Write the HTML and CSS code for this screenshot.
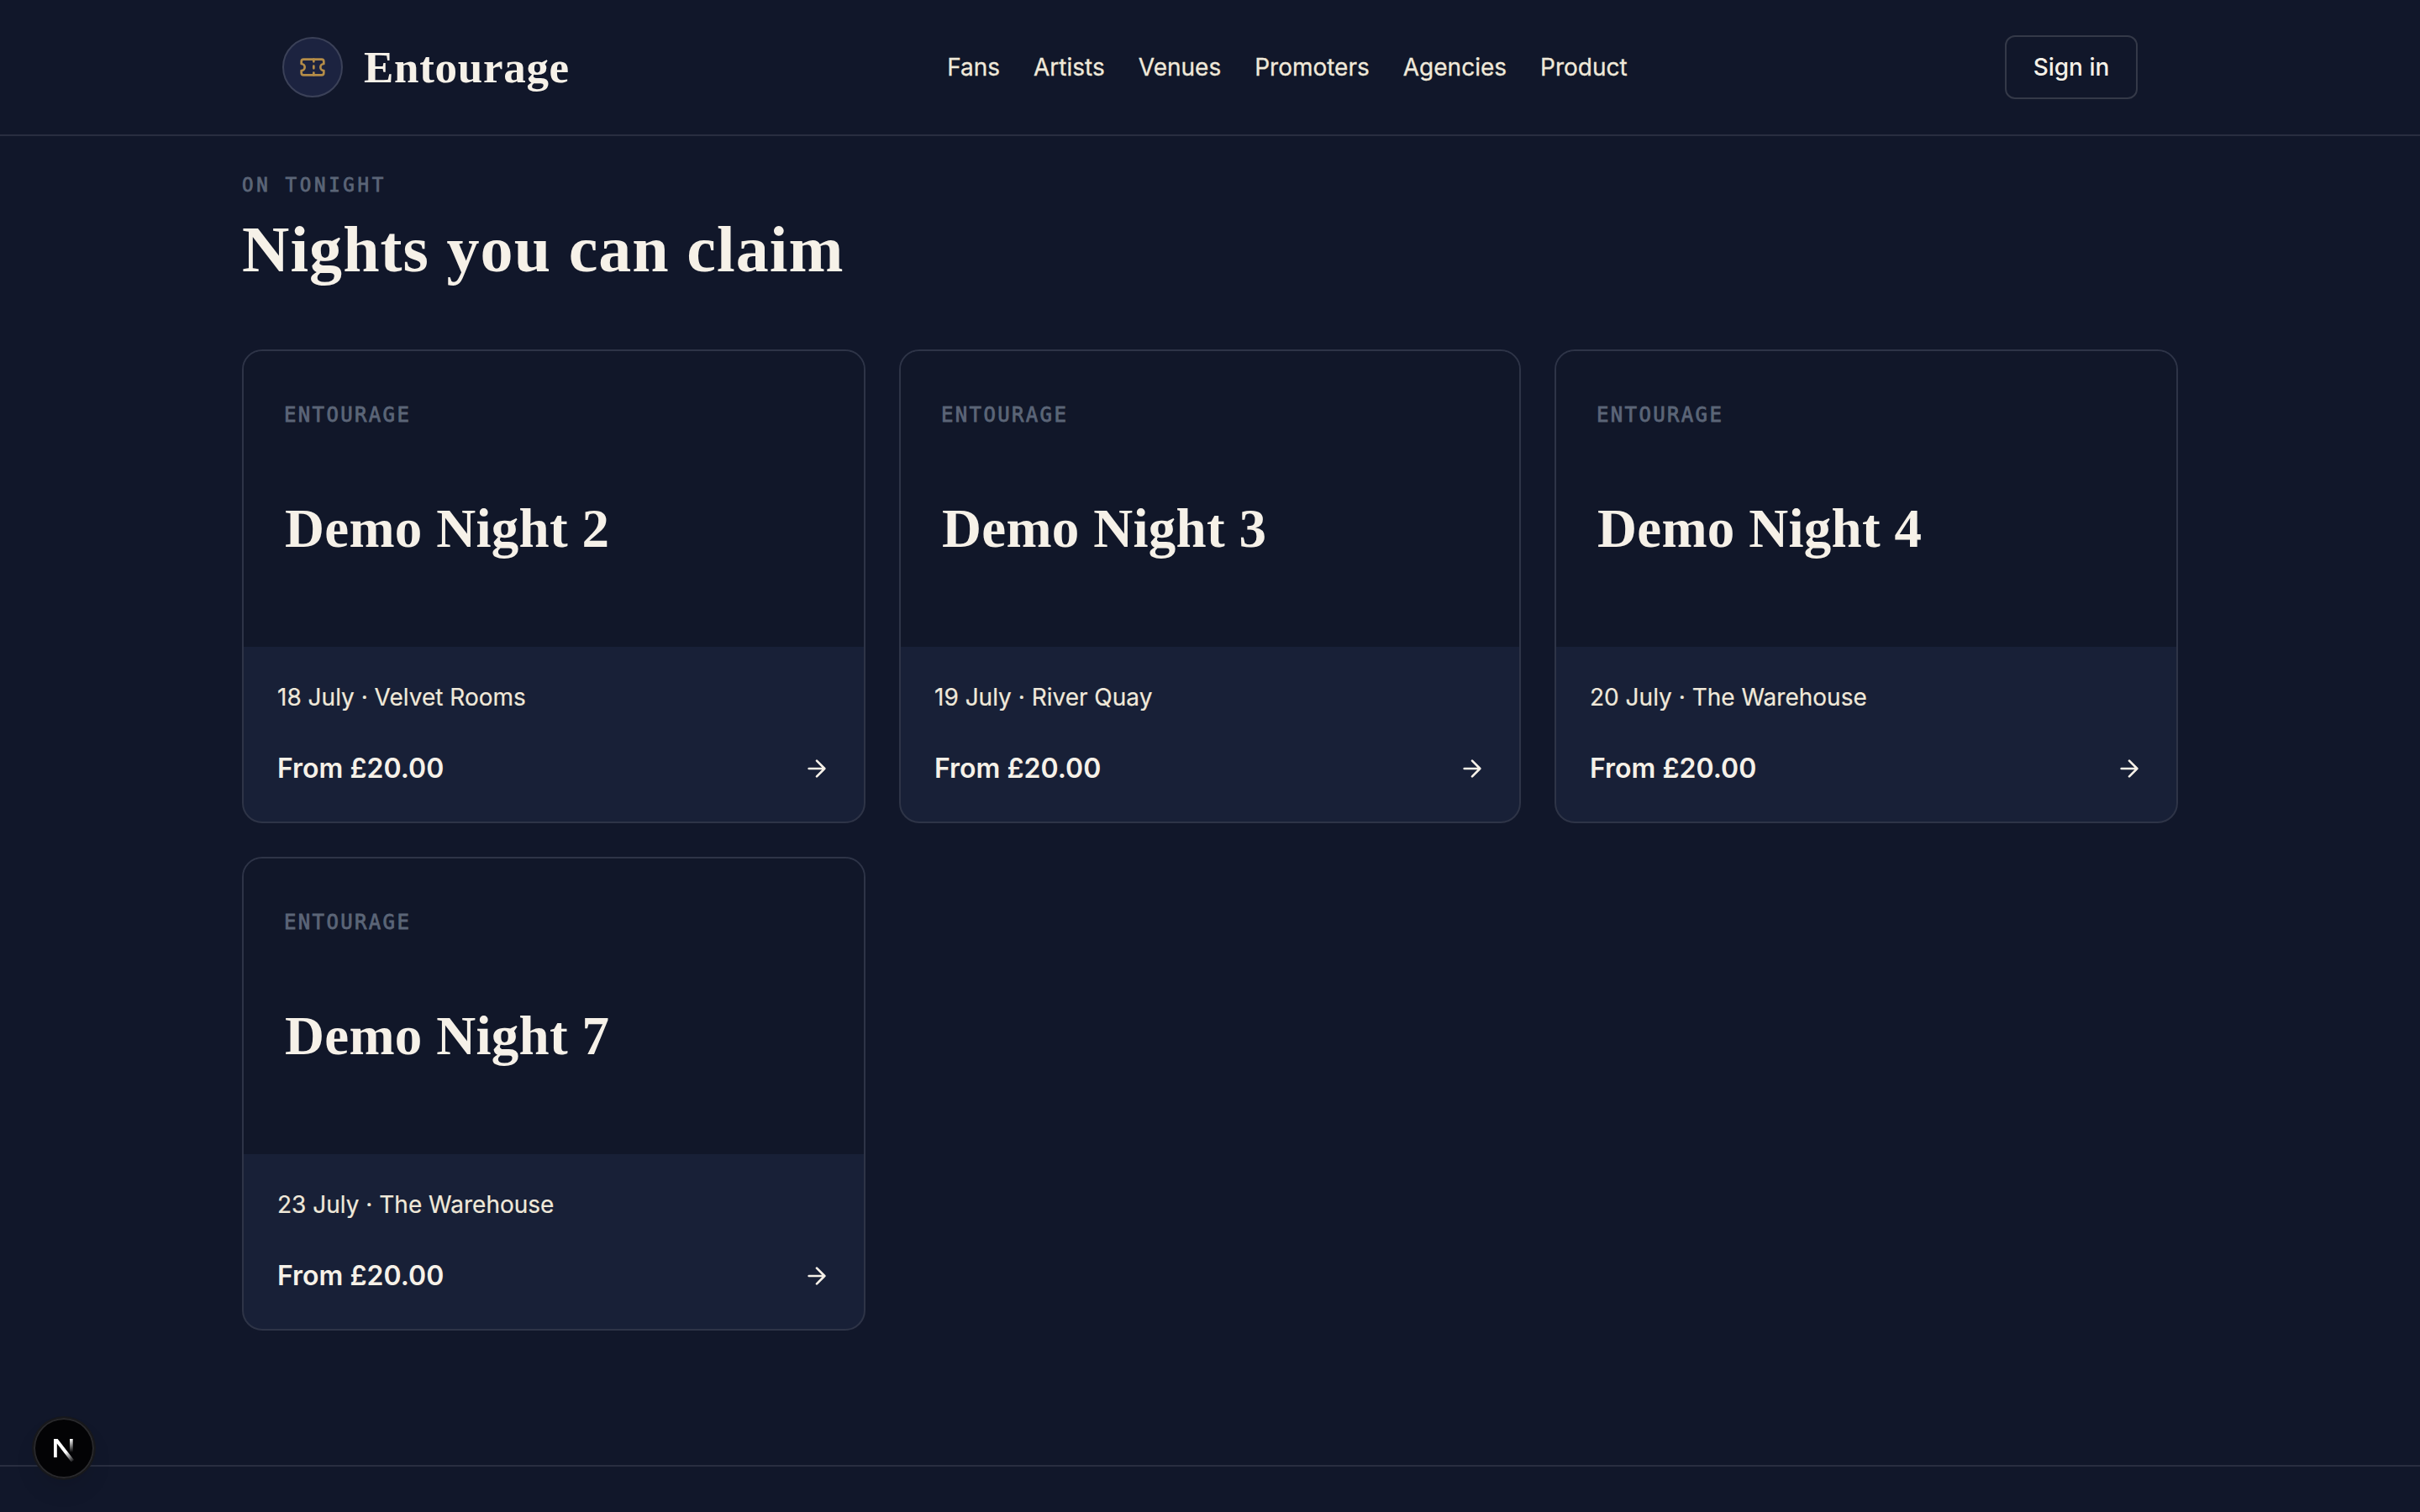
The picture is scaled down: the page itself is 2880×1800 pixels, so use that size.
FILE: index.html
```html
<!DOCTYPE html>
<html lang="en">
<head>
<meta charset="utf-8">
<title>Entourage</title>
<link rel="stylesheet" href="styles.css">
</head>
<body>
<svg class="sprite" aria-hidden="true">
  <symbol id="arrow" viewBox="0 0 24 24"><path d="M5 12h14M12 5l7 7-7 7"/></symbol>
</svg>
<header class="site-header">
  <div class="header-inner">
    <a class="brand">
      <span class="brand-mark">
        <svg class="icon" viewBox="0 0 24 24"><path d="M2 9a3 3 0 0 1 0 6v2a2 2 0 0 0 2 2h16a2 2 0 0 0 2-2v-2a3 3 0 0 1 0-6V7a2 2 0 0 0-2-2H4a2 2 0 0 0-2 2Z"/><path d="M13 5v2M13 17v2M13 11v2"/></svg>
      </span>
      <span class="brand-name">Entourage</span>
    </a>
    <nav class="nav">
      <a>Fans</a><a>Artists</a><a>Venues</a><a>Promoters</a><a>Agencies</a><a>Product</a>
    </nav>
    <a class="sign-in">Sign in</a>
  </div>
</header>
<main class="section">
  <p class="eyebrow">ON TONIGHT</p>
  <h1 class="heading">Nights you can claim</h1>
  <div class="grid">
    <article class="card">
      <div class="poster"><p class="poster-label">ENTOURAGE</p><h2 class="poster-title">Demo Night 2</h2></div>
      <div class="details"><p class="when">18 July · Velvet Rooms</p><div class="price-row"><span>From £20.00</span><svg class="icon"><use href="#arrow"/></svg></div></div>
    </article>
    <article class="card">
      <div class="poster"><p class="poster-label">ENTOURAGE</p><h2 class="poster-title">Demo Night 3</h2></div>
      <div class="details"><p class="when">19 July · River Quay</p><div class="price-row"><span>From £20.00</span><svg class="icon"><use href="#arrow"/></svg></div></div>
    </article>
    <article class="card">
      <div class="poster"><p class="poster-label">ENTOURAGE</p><h2 class="poster-title">Demo Night 4</h2></div>
      <div class="details"><p class="when">20 July · The Warehouse</p><div class="price-row"><span>From £20.00</span><svg class="icon"><use href="#arrow"/></svg></div></div>
    </article>
    <article class="card">
      <div class="poster"><p class="poster-label">ENTOURAGE</p><h2 class="poster-title">Demo Night 7</h2></div>
      <div class="details"><p class="when">23 July · The Warehouse</p><div class="price-row"><span>From £20.00</span><svg class="icon"><use href="#arrow"/></svg></div></div>
    </article>
  </div>
</main>
<footer class="site-footer"></footer>
<div class="dev-badge">
  <svg viewBox="0 0 72 72">
    <defs>
      <linearGradient id="fade-diagonal" gradientUnits="userSpaceOnUse" x1="38" y1="41" x2="47" y2="53"><stop stop-color="#fff"/><stop offset="1" stop-color="#fff" stop-opacity="0"/></linearGradient>
      <linearGradient id="fade-stem" x1="0" y1="0" x2="0" y2="1"><stop stop-color="#fff"/><stop offset="1" stop-color="#fff" stop-opacity="0"/></linearGradient>
    </defs>
    <rect x="43" y="25" width="3.7" height="16" fill="url(#fade-stem)"/>
    <path d="M24 47V25h4.6L48 50l-3.2 2.4L27.8 30.6V47Z" fill="url(#fade-diagonal)"/>
  </svg>
</div>
</body>
</html>
```
FILE: styles.css
```css
* { box-sizing: border-box; margin: 0; padding: 0; }

body {
  min-height: 1800px;
  display: flex;
  flex-direction: column;
  background: #11172a;
  color: #f6f1e8;
  font-family: Inter, "Liberation Sans", sans-serif;
}

.sprite { position: absolute; width: 0; height: 0; }

.icon {
  width: 32px;
  height: 32px;
  fill: none;
  stroke: currentColor;
  stroke-width: 2;
  stroke-linecap: round;
  stroke-linejoin: round;
}

.site-header { border-bottom: 2px solid #292e40; }

.header-inner {
  width: 2304px;
  height: 160px;
  margin: 0 auto;
  padding: 0 48px;
  display: flex;
  align-items: center;
  justify-content: space-between;
}

.brand { display: flex; align-items: center; gap: 25px; }

.brand-mark {
  width: 72px;
  height: 72px;
  display: grid;
  place-items: center;
  border: 2px solid #3b4158;
  border-radius: 50%;
  background: #1c2340;
  color: #b58d48;
}

.brand-name {
  font: 700 53px/64px "Liberation Serif", serif;
  letter-spacing: 0.7px;
}

.nav {
  display: flex;
  gap: 40px;
  color: #f0e9da;
  font-size: 28px;
  line-height: 40px;
  -webkit-text-stroke: 0.3px currentColor;
}

.sign-in {
  width: 158px;
  height: 76px;
  border: 2px solid #343948;
  border-radius: 12px;
  font-size: 28px;
  font-weight: 500;
  line-height: 72px;
  text-align: center;
}

.section {
  width: 2304px;
  margin: 0 auto;
  padding: 42px 0 160px;
}

.eyebrow, .poster-label {
  color: #5b6577;
  font-family: "DejaVu Sans Mono", monospace;
  line-height: 32px;
  -webkit-text-stroke: 0.8px currentColor;
}

.eyebrow { font-size: 22.5px; letter-spacing: 3.65px; }

.heading {
  margin: 16px 0 74px;
  font: 700 78px/90px "Liberation Serif", serif;
  letter-spacing: 1.05px;
}

.grid {
  display: grid;
  grid-template-columns: 742px 740px 742px;
  gap: 40px;
}

.card {
  overflow: hidden;
  border: 2px solid #2e3447;
  border-radius: 24px;
  background: #182037;
}

.poster {
  height: 352px;
  padding: 60px 48px 0;
  background: #111729;
}

.poster-label { font-size: 24px; letter-spacing: 2.35px; }

.poster-title {
  margin-top: 81px;
  padding-left: 1px;
  font: 700 65px/76px "Liberation Serif", serif;
  letter-spacing: 0.3px;
}

.details {
  height: 208px;
  padding: 40px;
  display: flex;
  flex-direction: column;
  gap: 40px;
}

.when {
  color: #f0e9da;
  font-size: 28px;
  line-height: 40px;
  -webkit-text-stroke: 0.2px currentColor;
}

.price-row {
  display: flex;
  align-items: center;
  justify-content: space-between;
  font-size: 32px;
  font-weight: 600;
  line-height: 48px;
}

.price-row span { padding-top: 1px; }

.site-footer { flex: 1; border-top: 2px solid #292e40; }

.dev-badge {
  position: absolute;
  left: 40px;
  top: 1688px;
  width: 72px;
  height: 72px;
  border-radius: 50%;
  background: #030305;
  box-shadow: inset 0 0 0 2px #29292c, 0 0 0 2px #17181c, 0 16px 32px -8px rgba(0, 0, 0, 0.14);
}

.dev-badge svg { display: block; width: 72px; height: 72px; }
```
